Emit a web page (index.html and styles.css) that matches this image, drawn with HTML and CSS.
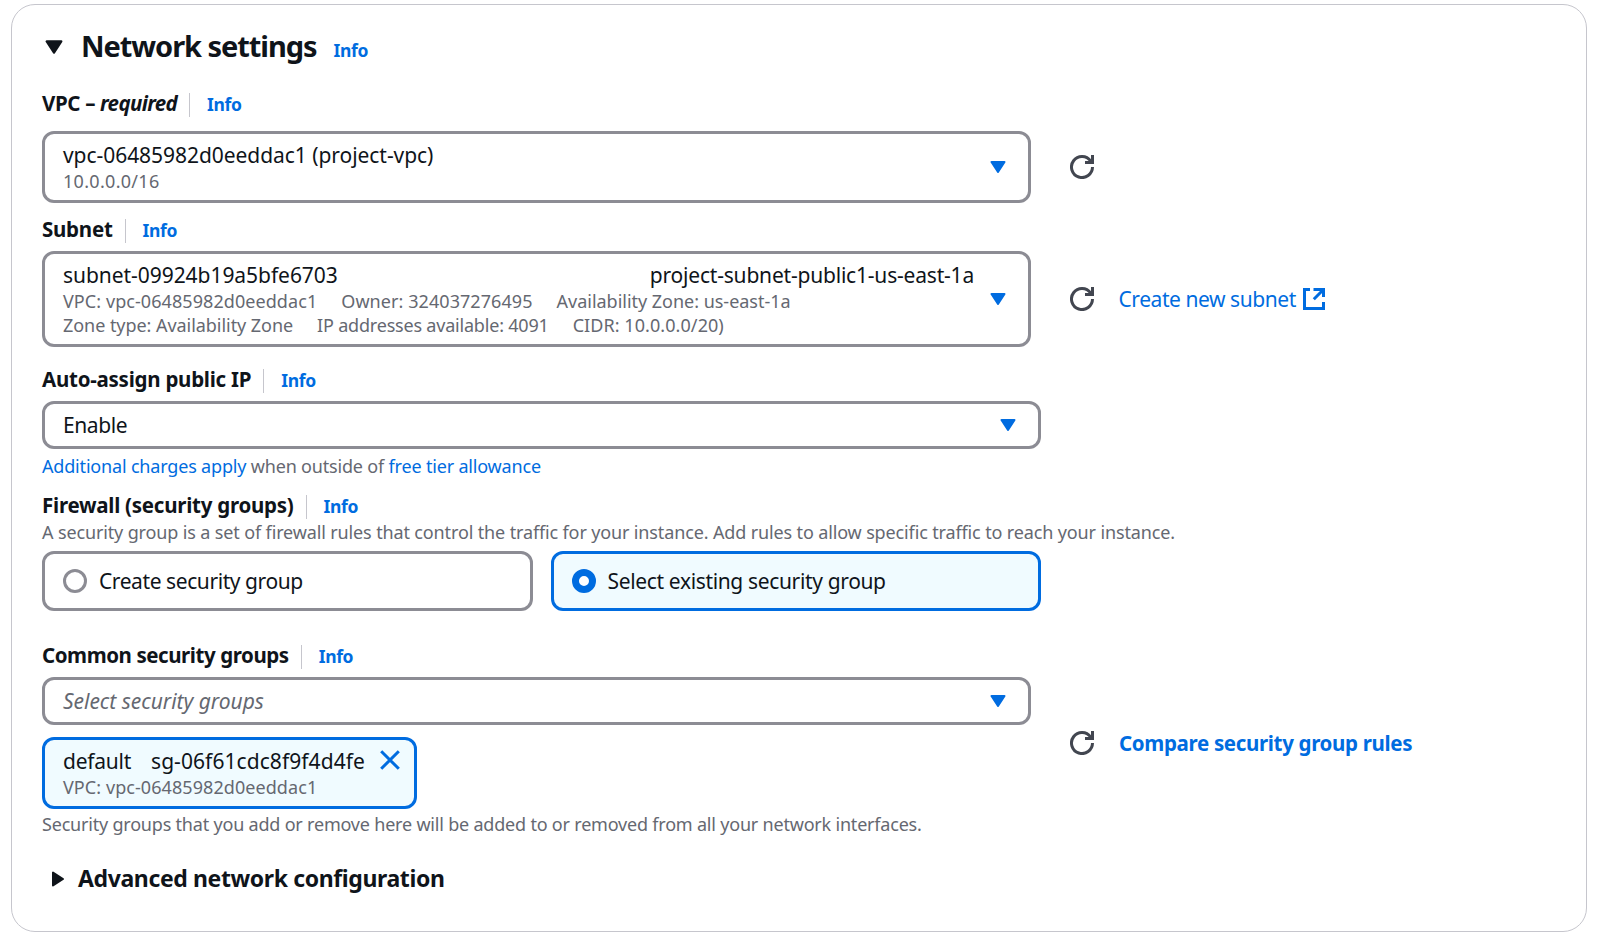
FILE: index.html
```html
<!DOCTYPE html>
<html lang="en">
<head>
<meta charset="utf-8">
<title>Network settings</title>
<link rel="stylesheet" href="styles.css">
</head>
<body>
<svg class="defs" aria-hidden="true">
  <symbol id="caret-down" viewBox="0 0 16 12"><path d="M1.5 1h13L8 11z" fill="currentColor" stroke="currentColor" stroke-width="2" stroke-linejoin="round"/></symbol>
  <symbol id="caret-right" viewBox="0 0 12 16"><path d="M1 1.5v13L11 8z" fill="currentColor" stroke="currentColor" stroke-width="2" stroke-linejoin="round"/></symbol>
  <symbol id="refresh" viewBox="0 0 24 24"><path d="M22.5 12A10.5 10.5 0 1 1 20.6 6l1 1.5M22.5 0v7.5H15" fill="none" stroke="currentColor" stroke-width="3"/></symbol>
  <symbol id="external" viewBox="0 0 22 22"><path d="M7 1.5H1.5v19h19V14M10.5 1.5h10V9M20.5 1.5 10.8 11.2" fill="none" stroke="currentColor" stroke-width="3"/></symbol>
  <symbol id="close" viewBox="0 0 20 20"><path d="M1.2 1.2l17.6 17.6M18.8 1.2L1.2 18.8" fill="none" stroke="currentColor" stroke-width="3"/></symbol>
</svg>

<main class="card">
  <header class="card-header">
    <svg class="caret-heading"><use href="#caret-down"/></svg>
    <h2 class="title">Network settings</h2>
    <a class="info info-heading">Info</a>
  </header>

  <section class="field field-vpc">
    <div class="label-row"><span class="label label-vpc">VPC – <em class="required">required</em></span><i class="divider"></i><a class="info">Info</a></div>
    <div class="control-row">
      <div class="select select-md">
        <div class="select-content">
          <div class="option-title track-1">vpc-06485982d0eeddac1 (project-vpc)</div>
          <div class="option-meta"><span class="track-wide">10.0.0.0/16</span></div>
        </div>
        <svg class="caret"><use href="#caret-down"/></svg>
      </div>
      <svg class="refresh"><use href="#refresh"/></svg>
    </div>
  </section>

  <section class="field field-subnet">
    <div class="label-row"><span class="label">Subnet</span><i class="divider"></i><a class="info">Info</a></div>
    <div class="control-row">
      <div class="select select-lg">
        <div class="select-content">
          <div class="option-title option-split"><span class="track-1">subnet-09924b19a5bfe6703</span><span class="track-3">project-subnet-public1-us-east-1a</span></div>
          <div class="option-meta"><span>VPC: vpc-06485982d0eeddac1</span><span>Owner: 324037276495</span><span class="track-0">Availability Zone: us-east-1a</span></div>
          <div class="option-meta option-meta-next"><span class="track-1">Zone type: Availability Zone</span><span class="track-3">IP addresses available: 4091</span><span>CIDR: 10.0.0.0/20)</span></div>
        </div>
        <svg class="caret"><use href="#caret-down"/></svg>
      </div>
      <svg class="refresh"><use href="#refresh"/></svg>
      <a class="create-link">Create new subnet<svg class="external"><use href="#external"/></svg></a>
    </div>
  </section>

  <section class="field field-ip">
    <div class="label-row"><span class="label">Auto-assign public IP</span><i class="divider"></i><a class="info">Info</a></div>
    <div class="select select-sm select-full">
      <div class="select-content"><div class="option-title track-5">Enable</div></div>
      <svg class="caret"><use href="#caret-down"/></svg>
    </div>
    <p class="hint hint-ip"><a>Additional charges apply</a> when outside of <a>free tier allowance</a></p>
  </section>

  <section class="field field-firewall">
    <div class="label-row"><span class="label">Firewall (security groups)</span><i class="divider"></i><a class="info">Info</a></div>
    <p class="hint description">A security group is a set of firewall rules that control the traffic for your instance. Add rules to allow specific traffic to reach your instance.</p>
    <div class="tiles">
      <label class="tile"><i class="radio"></i><span class="track-5">Create security group</span></label>
      <label class="tile tile-selected"><i class="radio radio-checked"></i><span class="track-select">Select existing security group</span></label>
    </div>
  </section>

  <section class="field field-groups">
    <div class="label-row"><span class="label label-tight">Common security groups</span><i class="divider"></i><a class="info">Info</a></div>
    <div class="control-row">
      <div class="group-column">
        <div class="select select-sm">
          <div class="select-content"><div class="option-title placeholder">Select security groups</div></div>
          <svg class="caret"><use href="#caret-down"/></svg>
        </div>
        <div class="token">
          <div>
            <div class="option-title token-title"><span class="track-4">default</span><span class="token-id">sg-06f61cdc8f9f4d4fe</span></div>
            <div class="option-meta">VPC: vpc-06485982d0eeddac1</div>
          </div>
          <svg class="close"><use href="#close"/></svg>
        </div>
      </div>
      <svg class="refresh"><use href="#refresh"/></svg>
      <a class="compare-link">Compare security group rules</a>
    </div>
    <p class="hint hint-groups">Security groups that you add or remove here will be added to or removed from all your network interfaces.</p>
  </section>

  <div class="advanced"><svg class="caret-advanced"><use href="#caret-right"/></svg><h3 class="advanced-title">Advanced network configuration</h3></div>
</main>
</body>
</html>
```
FILE: styles.css
```css
* { box-sizing: border-box; }

body {
  margin: 0;
  background: #fff;
  color: #0f141a;
  font-family: "Noto Sans", "Open Sans", sans-serif;
  font-size: 21px;
  white-space: nowrap;
}

svg { display: block; flex: none; }
.defs { display: none; }
h2, h3, p { margin: 0; }
a { color: #006ce0; }

.card {
  width: 1576px;
  height: 928px;
  margin: 4px 0 0 11px;
  padding: 21px 30px 0;
  border: 1px solid #c6c6cd;
  border-radius: 24px;
}

.card-header {
  display: flex;
  align-items: baseline;
  height: 40px;
  line-height: 40px;
}
.caret-heading {
  width: 18px;
  height: 14px;
  margin: 14px 18px 0 3px;
  align-self: flex-start;
}
.title { font-size: 29px; font-weight: 700; letter-spacing: -1.05px; }

.info { font-size: 17.5px; font-weight: 700; letter-spacing: -0.35px; }
.info-heading { margin-left: 17px; }

/* Labels */
.label-row {
  display: flex;
  align-items: baseline;
  height: 24px;
  line-height: 24px;
}
.label { font-size: 20.5px; font-weight: 700; letter-spacing: -0.25px; }
.label-tight { letter-spacing: -0.43px; }
.label-vpc { letter-spacing: -0.35px; }
.required { letter-spacing: -0.65px; }
.divider {
  align-self: flex-start;
  width: 1px;
  height: 24px;
  margin: 2px 17px 0 12px;
  background: #c6c6cd;
}

.field-vpc { margin-top: 25px; }
.field-vpc .control-row { margin-top: 16px; }
.field-subnet { margin-top: 14px; }
.field-subnet .control-row { margin-top: 10px; }
.field-ip { margin-top: 20px; }
.field-ip .select { margin-top: 10px; }
.field-firewall { margin-top: 15px; }
.field-groups { margin-top: 32px; }
.field-groups .control-row { margin-top: 10px; }

/* Selects */
.control-row { display: flex; align-items: center; }
.select {
  display: flex;
  align-items: center;
  width: 989px;
  padding: 0 22px 0 18px;
  border: 3px solid #8c8c94;
  border-radius: 12px;
}
.select-full { width: 999px; }
.select-sm { height: 48px; }
.select-md { height: 72px; }
.select-lg { height: 96px; }
.select-content { align-self: flex-start; flex: 1; padding: 8px 16px 0 0; }
.option-title { height: 26px; line-height: 26px; }
.option-split { display: flex; justify-content: space-between; }
.option-meta {
  display: flex;
  gap: 24px;
  height: 24px;
  margin-top: 1px;
  line-height: 24px;
  font-size: 18px;
  color: #656871;
  letter-spacing: 0.07px;
}
.option-meta-next { margin-top: 0; }
.placeholder { font-style: italic; color: #656871; letter-spacing: -0.03px; }
.caret { width: 16px; height: 12px; color: #006ce0; }

.track-wide { letter-spacing: 0.3px; }
.track-0 { letter-spacing: -0.02px; }
.track-1 { letter-spacing: -0.05px; }
.track-3 { letter-spacing: -0.2px; }
.track-4 { letter-spacing: -0.25px; }
.track-5 { letter-spacing: -0.42px; }
.track-select { letter-spacing: -0.35px; }

.refresh { width: 24px; height: 24px; margin-left: 39px; color: #424650; }
.create-link {
  display: flex;
  align-items: center;
  gap: 7px;
  margin-left: 24.5px;
  letter-spacing: -0.44px;
}
.external { width: 22px; height: 22px; }
.compare-link {
  margin: -1px 0 0 25px;
  font-size: 20.5px;
  font-weight: 700;
  letter-spacing: -0.33px;
}

/* Helper text */
.hint {
  height: 24px;
  line-height: 24px;
  font-size: 18px;
  letter-spacing: -0.2px;
  color: #656871;
}
.hint-ip { margin-top: 5px; letter-spacing: -0.18px; }
.description { margin-top: 3px; letter-spacing: -0.135px; }
.hint-groups { margin-top: 3px; }

/* Radio tiles */
.tiles { display: flex; gap: 18px; width: 999px; margin-top: 7px; }
.tile {
  display: flex;
  flex: 1;
  align-items: center;
  gap: 12px;
  height: 60px;
  padding: 0 18px;
  border: 3px solid #8c8c94;
  border-radius: 12px;
  line-height: 26px;
}
.tile-selected { background: #f0fbff; border-color: #006ce0; }
.radio {
  width: 24px;
  height: 24px;
  border: 3px solid #8c8c94;
  border-radius: 50%;
  background: #fff;
}
.radio-checked { border: 7px solid #006ce0; }

/* Selected group token */
.token {
  display: flex;
  justify-content: space-between;
  width: 375px;
  height: 72px;
  margin-top: 12px;
  padding: 8px 14px 0 18px;
  border: 3px solid #006ce0;
  border-radius: 12px;
  background: #f0fbff;
}
.token-title { display: flex; gap: 20px; }
.token-id { letter-spacing: 0.07px; }
.close { width: 20px; height: 20px; margin-top: 2px; color: #006ce0; }

.advanced { display: flex; align-items: center; height: 32px; margin-top: 26px; }
.caret-advanced { width: 12px; height: 16px; margin: 2px 14px 0 10px; }
.advanced-title { font-size: 23px; line-height: 32px; letter-spacing: -0.38px; }
```
